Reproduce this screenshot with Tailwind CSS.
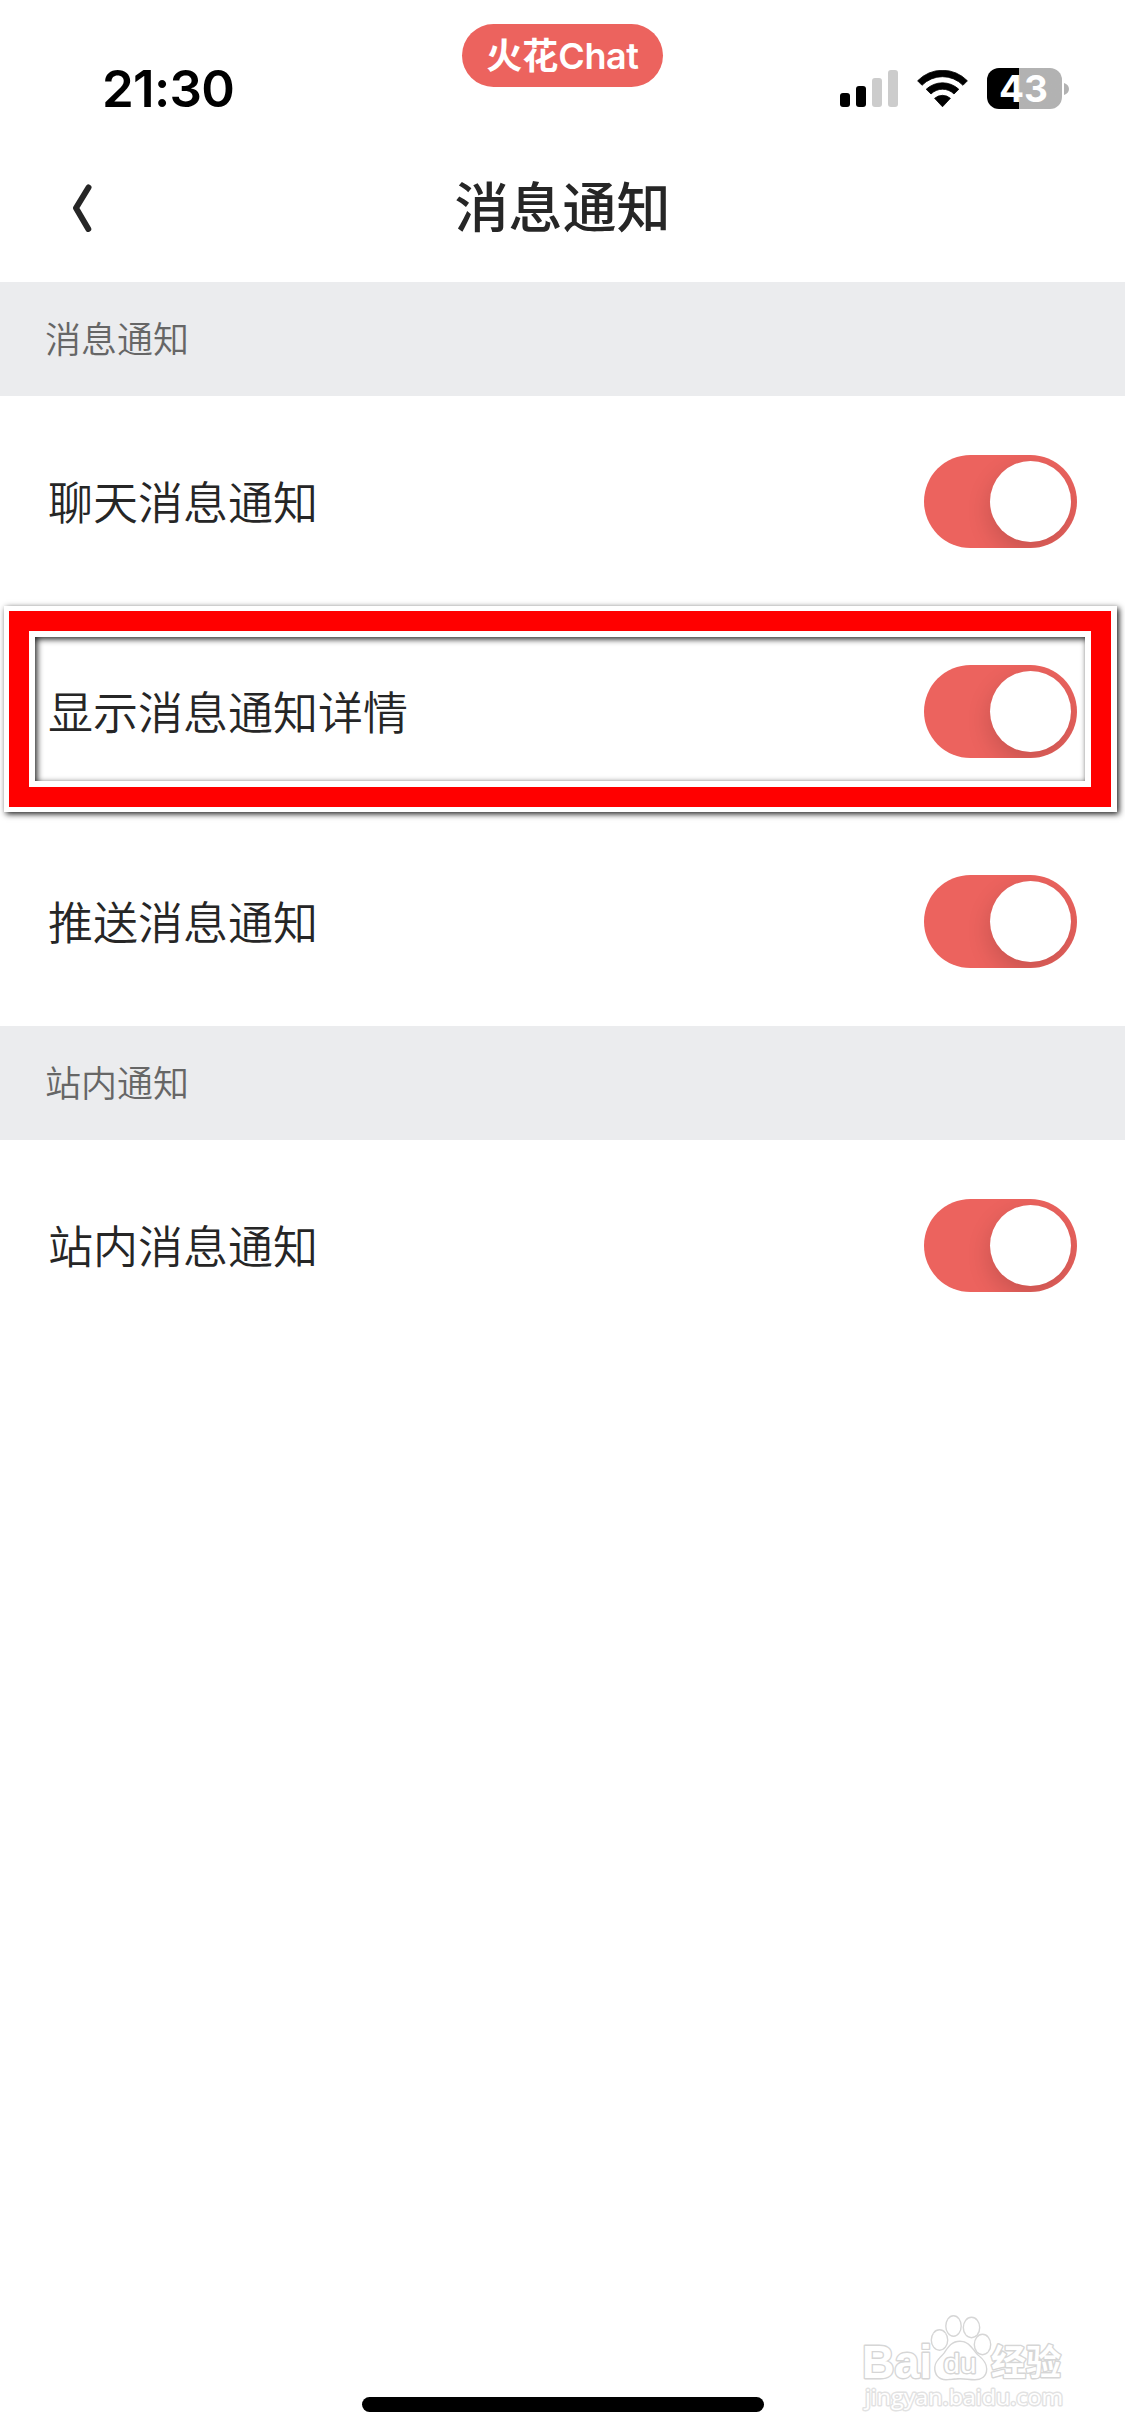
<!DOCTYPE html>
<html lang="zh-CN">
<head>
<meta charset="utf-8">
<title>消息通知</title>
<script src="https://cdn.jsdelivr.net/npm/@tailwindcss/browser@4"></script>
</head>
<body class="bg-white">
<div class="relative flex h-[2436px] w-[1125px] flex-col overflow-hidden bg-white font-['Inter','Noto_Sans_CJK_SC',sans-serif] text-[#262626]">

  <!-- Status bar -->
  <header class="flex h-[132px] items-start pl-[102px] text-black">
    <div class="mt-[58px] w-[360px] shrink-0 text-[51px] leading-[62px] font-semibold tracking-[-0.7px]">21:30</div>
    <div class="mt-6 flex h-[63px] w-[201px] shrink-0 items-center justify-center rounded-full bg-[#ec635e] text-[36px] font-bold whitespace-nowrap text-white"><span>火花</span><span class="font-semibold tracking-[-0.4px]">Chat</span></div>
    <div class="mt-[68px] flex w-[406px] shrink-0 items-start justify-end">
      <svg class="mt-0.5 h-[37px] w-[58px]" viewBox="0 0 58 37"><rect y="23" width="10" height="14" rx="3"/><rect x="16" y="16" width="10" height="21" rx="3"/><rect x="32" y="8" width="10" height="29" rx="3" fill="#ccc"/><rect x="48" width="10" height="37" rx="3" fill="#ccc"/></svg>
      <svg class="mt-0.5 ml-[19px] h-[37px] w-[51px]" viewBox="0 0 51 37"><path d="M.6 10.8A34.6 34.6 0 0 1 50.4 10.8L46 15.3A28.7 28.7 0 0 0 5 15.3ZM9.2 19.3A23.7 23.7 0 0 1 41.8 19.3L37 24A16.2 16.2 0 0 0 14 24ZM17.6 28.3A12 12 0 0 1 33.4 28.3L25.5 36.8Z" stroke="#000" stroke-width=".8" stroke-linejoin="round"/></svg>
      <div class="ml-[19px] flex h-[41px] w-[75px] items-center justify-center rounded-[12px] bg-linear-to-r from-black from-[32px] to-[#b2b2b2] to-[32px] pr-0.5 text-[37px] leading-none font-bold text-white">43</div>
      <svg class="mt-[15px] ml-0.5 h-3 w-[5px]" viewBox="0 0 5 12"><path d="M0 0C3 1 5 3 5 6S3 11 0 12Z" fill="#b2b2b2"/></svg>
    </div>
  </header>

  <!-- Navigation bar -->
  <nav class="grid h-[150px] grid-cols-[1fr_auto_1fr] items-center pl-[72px]">
    <svg class="mt-px h-12 w-5" viewBox="0 0 20 48" fill="none" stroke="#262626" stroke-width="6" stroke-linecap="round" stroke-linejoin="round"><path d="M16.5 3.5L4 24L16.3 45"/></svg>
    <h1 class="-ml-[72px] pt-[3px] text-[54px] leading-[76px] font-medium">消息通知</h1>
  </nav>

  <h2 class="flex h-[114px] items-center bg-[#ebecee] pt-0.5 pl-[45px] text-[36px] font-[350] text-[#666]">消息通知</h2>

  <div class="flex h-[210px] items-center justify-between pr-12 pl-12">
    <span class="pt-[5px] text-[45px] font-[350]">聊天消息通知</span>
    <span class="flex h-[93px] w-[153px] items-center justify-end overflow-hidden rounded-full bg-[#ec635e] pr-1.5"><span class="size-[81px] rounded-full bg-white shadow-[0_9px_24px_rgba(0,0,0,0.16)]"></span></span>
  </div>
  <div class="relative flex h-[210px] items-center justify-between pr-12 pl-12">
    <span class="pt-[5px] text-[45px] font-[350]">显示消息通知详情</span>
    <span class="flex h-[93px] w-[153px] items-center justify-end overflow-hidden rounded-full bg-[#ec635e] pr-1.5"><span class="size-[81px] rounded-full bg-white shadow-[0_9px_24px_rgba(0,0,0,0.16)]"></span></span>
    <!-- Highlight frame over the row -->
    <div class="absolute top-0 left-1 h-[206px] w-[1113px] border-t-5 border-r-6 border-b-5 border-l-5 border-white shadow-[2px_2px_6px_rgba(0,0,0,0.9)]">
      <div class="h-full w-full border-[20px] border-[#f00]">
        <div class="h-full w-full border-6 border-white">
          <div class="h-full w-full shadow-[inset_2px_2px_6px_rgba(0,0,0,0.9)]"></div>
        </div>
      </div>
    </div>
  </div>
  <div class="flex h-[210px] items-center justify-between pr-12 pl-12">
    <span class="pt-[5px] text-[45px] font-[350]">推送消息通知</span>
    <span class="flex h-[93px] w-[153px] items-center justify-end overflow-hidden rounded-full bg-[#ec635e] pr-1.5"><span class="size-[81px] rounded-full bg-white shadow-[0_9px_24px_rgba(0,0,0,0.16)]"></span></span>
  </div>

  <h2 class="flex h-[114px] items-center bg-[#ebecee] pt-0.5 pl-[45px] text-[36px] font-[350] text-[#666]">站内通知</h2>

  <div class="flex h-[210px] items-center justify-between pr-12 pl-12">
    <span class="pt-[5px] text-[45px] font-[350]">站内消息通知</span>
    <span class="flex h-[93px] w-[153px] items-center justify-end overflow-hidden rounded-full bg-[#ec635e] pr-1.5"><span class="size-[81px] rounded-full bg-white shadow-[0_9px_24px_rgba(0,0,0,0.16)]"></span></span>
  </div>

  <!-- Home indicator -->
  <div class="mt-auto mb-6 h-[15px] w-[402px] self-center rounded-full bg-black"></div>

  <!-- Watermark -->
  <svg class="absolute right-0 bottom-0 h-[146px] w-[285px]" viewBox="0 0 285 146" fill="#fff" stroke="#d6d6d6" stroke-width="2.8" stroke-linejoin="round" paint-order="stroke">
    <text x="22" y="87.5" font-family="Liberation Sans" font-weight="700" font-size="46" textLength="70" lengthAdjust="spacingAndGlyphs">Bai</text>
    <g>
      <ellipse cx="99.500" cy="50" rx="7.500" ry="9.500"/>
      <ellipse cx="113.500" cy="36" rx="7" ry="9.500"/>
      <ellipse cx="131.500" cy="37.500" rx="7.500" ry="9.500"/>
      <ellipse cx="142.500" cy="54.500" rx="7.500" ry="9.500"/>
      <path d="M120 52C129 52 132 60 137 65C142 69 146 73 146 79C146 86 141 89 135 89C129 89 126 88 120 88C114 88 111 89 106 89C99 89 95 84 95.500 77C96 71 101 68 105 63C109 57 112 52 120 52Z"/>
    </g>
    <text x="103.500" y="82.500" font-family="Liberation Sans" font-size="28" textLength="33" lengthAdjust="spacingAndGlyphs">du</text>
    <text x="151" y="85" font-family="Noto Sans CJK SC" font-weight="700" font-size="35" textLength="70" lengthAdjust="spacingAndGlyphs">经验</text>
    <text x="25" y="115" font-family="Open Sans" font-size="22.500" stroke="#e2e2e2" textLength="198" lengthAdjust="spacingAndGlyphs">jingyan.baidu.com</text>
  </svg>
</div>
</body>
</html>
